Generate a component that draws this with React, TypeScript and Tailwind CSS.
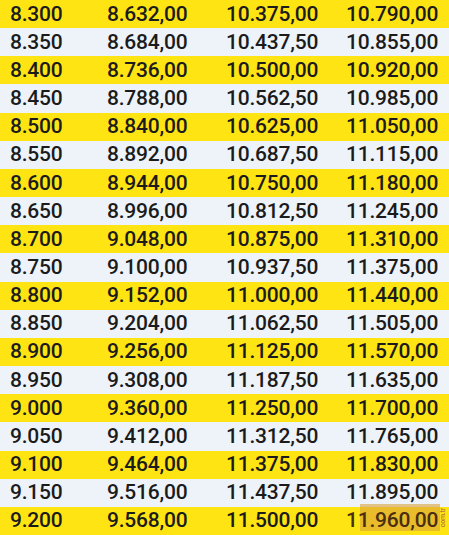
import React from "react";

const rows: [string, string, string, string][] = [
  ["8.300", "8.632,00", "10.375,00", "10.790,00"],
  ["8.350", "8.684,00", "10.437,50", "10.855,00"],
  ["8.400", "8.736,00", "10.500,00", "10.920,00"],
  ["8.450", "8.788,00", "10.562,50", "10.985,00"],
  ["8.500", "8.840,00", "10.625,00", "11.050,00"],
  ["8.550", "8.892,00", "10.687,50", "11.115,00"],
  ["8.600", "8.944,00", "10.750,00", "11.180,00"],
  ["8.650", "8.996,00", "10.812,50", "11.245,00"],
  ["8.700", "9.048,00", "10.875,00", "11.310,00"],
  ["8.750", "9.100,00", "10.937,50", "11.375,00"],
  ["8.800", "9.152,00", "11.000,00", "11.440,00"],
  ["8.850", "9.204,00", "11.062,50", "11.505,00"],
  ["8.900", "9.256,00", "11.125,00", "11.570,00"],
  ["8.950", "9.308,00", "11.187,50", "11.635,00"],
  ["9.000", "9.360,00", "11.250,00", "11.700,00"],
  ["9.050", "9.412,00", "11.312,50", "11.765,00"],
  ["9.100", "9.464,00", "11.375,00", "11.830,00"],
  ["9.150", "9.516,00", "11.437,50", "11.895,00"],
  ["9.200", "9.568,00", "11.500,00", "11.960,00"],
];

export default function App() {
  return (
    <div
      className="w-[449px] h-[535px] flex flex-col overflow-hidden bg-[#eef3fa] text-[#1b1b1b] text-[21px] font-medium tracking-[-0.2px]"
      style={{ fontFamily: "Roboto, 'Liberation Sans', sans-serif" }}
    >
      {rows.map((r, i) => {
        const last = i === rows.length - 1;
        return (
          <div
            key={i}
            className={`flex-1 flex items-center leading-none ${
              i % 2 === 0 ? "bg-[#ffe414]" : "bg-[#eef3fa]"
            }`}
          >
            <div className="w-[107px] pl-[10px]">{r[0]}</div>
            <div className="w-[119px]">{r[1]}</div>
            <div className="w-[120px]">{r[2]}</div>
            <div className="flex-1 relative">
              {last ? (
                <>
                  <div className="absolute left-[14px] top-[-6px] w-[80px] h-[27px] bg-[#d9a23a]/60" />
                  <span className="relative text-[#4a2e10]">{r[3]}</span>
                  <span className="absolute right-[2px] top-[-2px] text-[7px] text-[#b0773a] [writing-mode:vertical-rl] rotate-180">
                    com.tr
                  </span>
                </>
              ) : (
                r[3]
              )}
            </div>
          </div>
        );
      })}
    </div>
  );
}
